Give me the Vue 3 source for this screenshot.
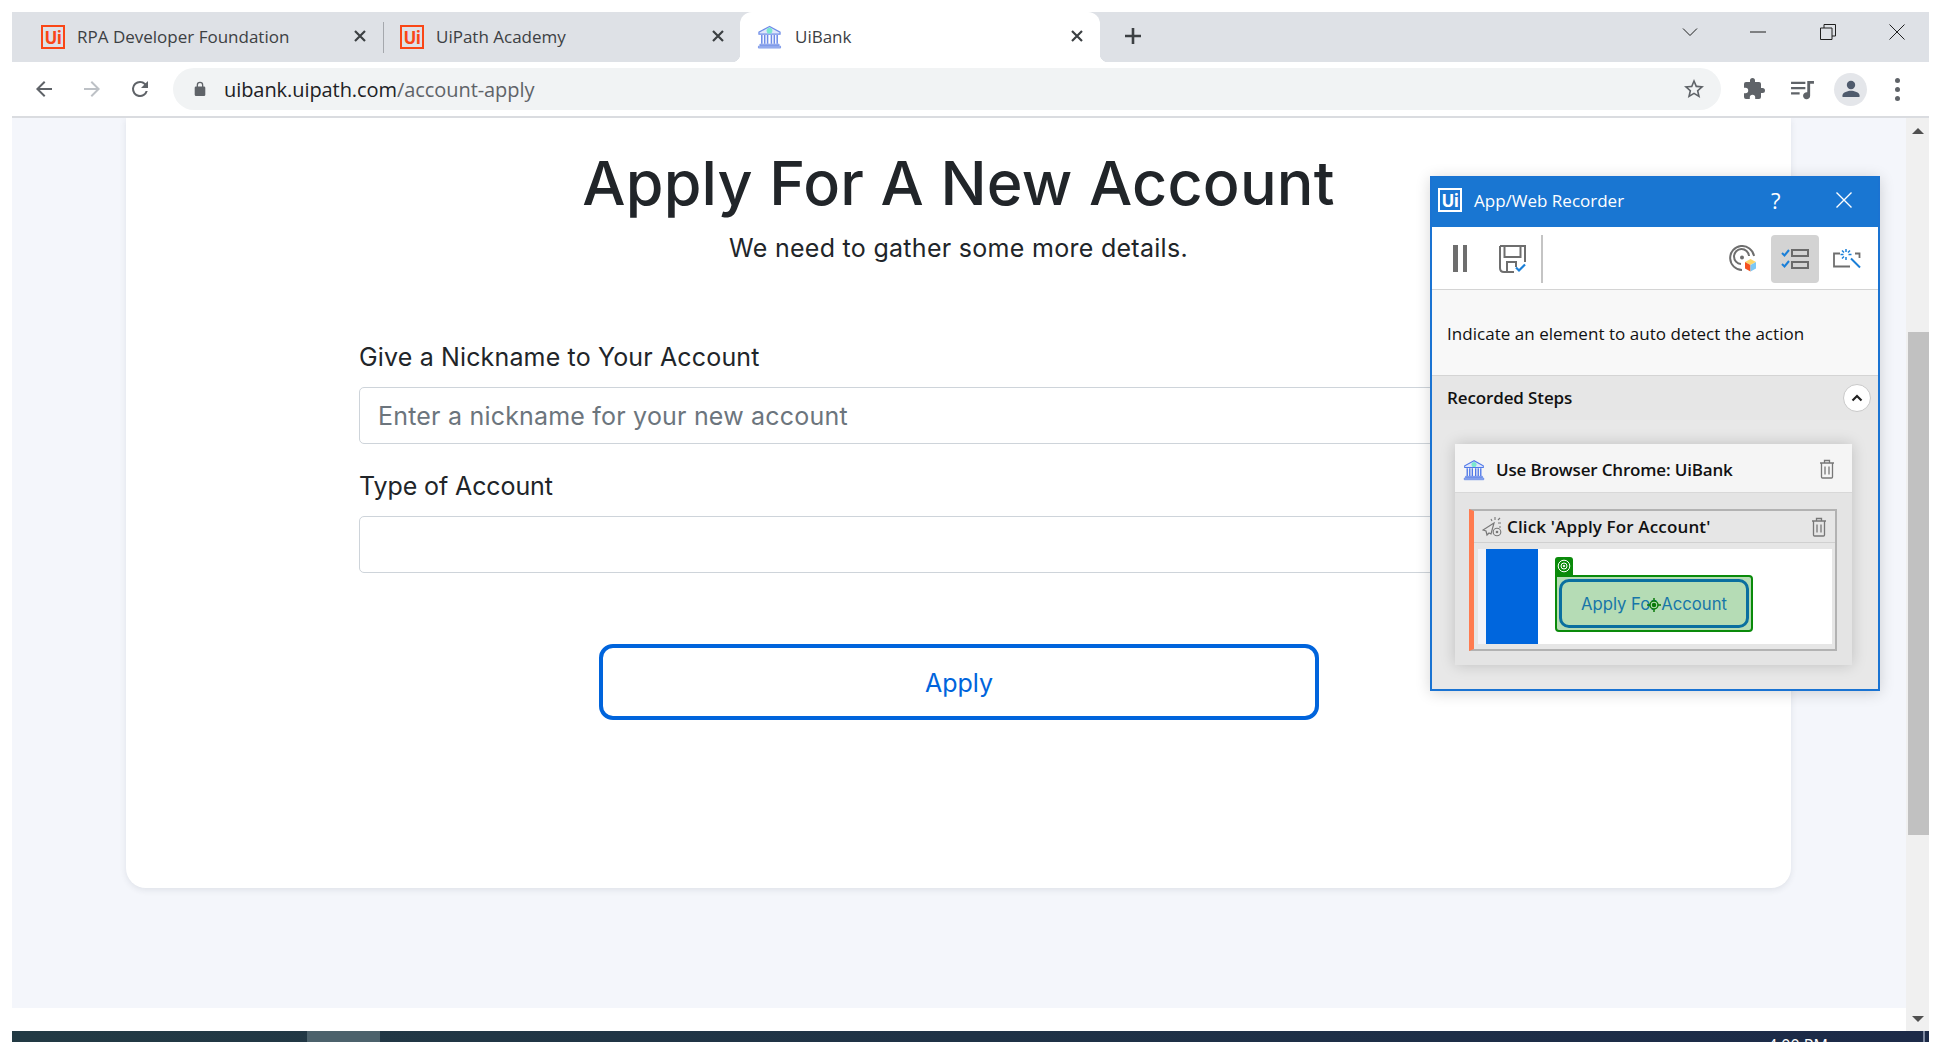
<template>
  <div class="screen">
    <div class="browser">
      <div class="tabstrip">
        <div class="tab tab-one">
          <span class="ui-logo">Ui</span>
          <span class="tab-title">RPA Developer Foundation</span>
          <svg class="tab-x" viewBox="0 0 14 14"><path d="M2 2l10 10M12 2L2 12" /></svg>
        </div>
        <div class="tab-sep"></div>
        <div class="tab tab-two">
          <span class="ui-logo">Ui</span>
          <span class="tab-title">UiPath Academy</span>
          <svg class="tab-x" viewBox="0 0 14 14"><path d="M2 2l10 10M12 2L2 12" /></svg>
        </div>
        <div class="tab tab-active">
          <svg class="bank" viewBox="0 0 26 24">
            <path d="M13 1L2 7v2h22V7z" fill="#dfe6fb" stroke="#6d8ce8" stroke-width="1.2" />
            <circle cx="13" cy="5.5" r="3" fill="#7ce8cf" />
            <path d="M5 10v9M8 10v9M11 10v9M15 10v9M18 10v9M21 10v9" stroke="#6d8ce8" stroke-width="1.6" />
            <path d="M3 19.5h20V21H3zM1.5 21.5h23v2h-23z" fill="#a9bcf0" stroke="#6d8ce8" stroke-width=".8" />
          </svg>
          <span class="tab-title">UiBank</span>
          <svg class="tab-x" viewBox="0 0 14 14"><path d="M2 2l10 10M12 2L2 12" /></svg>
        </div>
        <svg class="new-tab" viewBox="0 0 18 18"><path d="M9 1v16M1 9h16" /></svg>
        <div class="win-controls">
          <svg class="wc wc-chev" viewBox="0 0 16 10"><path d="M1 1.5l7 7 7-7" /></svg>
          <svg class="wc wc-min" viewBox="0 0 16 10"><path d="M0 5h16" /></svg>
          <svg class="wc wc-max" viewBox="0 0 16 16"><path d="M.5 4H12v11.5H.5zM4 4V.5h11.5V12H12" /></svg>
          <svg class="wc wc-close" viewBox="0 0 16 16"><path d="M.5.5l15 15M15.5.5l-15 15" /></svg>
        </div>
      </div>

      <div class="toolbar">
        <svg class="nav" viewBox="0 0 24 24" fill="#5f6368"><path d="M20 11H7.83l5.59-5.59L12 4l-8 8 8 8 1.41-1.41L7.83 13H20z" /></svg>
        <svg class="nav nav-fwd" viewBox="0 0 24 24" fill="#bdc1c6"><path d="M4 11h12.17l-5.59-5.59L12 4l8 8-8 8-1.41-1.41L16.17 13H4z" /></svg>
        <svg class="nav nav-reload" viewBox="0 0 24 24" fill="#5f6368"><path d="M17.65 6.35A7.96 7.96 0 0 0 12 4a8 8 0 1 0 7.73 10h-2.08A6 6 0 1 1 12 6c1.66 0 3.14.69 4.22 1.78L13 11h7V4z" /></svg>
        <div class="omnibox">
          <svg class="lock" viewBox="0 0 12 16" fill="#5f6368"><path d="M10 5.5h-.7V4a3.3 3.3 0 0 0-6.6 0v1.5H2A1.3 1.3 0 0 0 .7 6.8v7A1.3 1.3 0 0 0 2 15h8a1.3 1.3 0 0 0 1.3-1.3v-7A1.3 1.3 0 0 0 10 5.5zM4 5.5V4a2 2 0 0 1 4 0v1.5z" /></svg>
          <span class="url"><b>uibank.uipath.com</b>/account-apply</span>
          <svg class="star" viewBox="0 0 24 24" fill="#5f6368"><path d="M22 9.24l-7.19-.62L12 2 9.19 8.63 2 9.24l5.46 4.73L5.82 21 12 17.27 18.18 21l-1.63-7.03L22 9.24zM12 15.4l-3.76 2.27 1-4.28-3.32-2.88 4.38-.38L12 6.1l1.71 4.04 4.38.38-3.32 2.88 1 4.28L12 15.4z" /></svg>
        </div>
        <svg class="ext" viewBox="0 0 24 24" fill="#5f6368"><path d="M20.5 11H19V7a2 2 0 0 0-2-2h-4V3.5a2.5 2.5 0 0 0-5 0V5H4a2 2 0 0 0-2 2v3.8h1.5a2.7 2.7 0 0 1 0 5.4H2V20a2 2 0 0 0 2 2h3.8v-1.5a2.7 2.7 0 0 1 5.4 0V22H17a2 2 0 0 0 2-2v-4h1.5a2.5 2.5 0 0 0 0-5z" /></svg>
        <svg class="media" viewBox="0 0 26 22" fill="#5f6368"><path d="M1 3h15v2.200H1zM1 8.500h15v2.200H1zM1 14h9v2.200H1zM18 2h7v3h-4v12.500a3.700 3.700 0 1 1-3-3.600z" /></svg>
        <div class="avatar">
          <svg viewBox="0 0 24 24" fill="#4f5b6d"><circle cx="12" cy="8" r="4.200" /><path d="M3.500 20v-1.800c0-3 5.700-4.500 8.500-4.500s8.500 1.500 8.500 4.500V20z" /></svg>
        </div>
        <div class="menu-dots"><i></i><i></i><i></i></div>
      </div>

      <div class="viewport">
        <div class="page">
          <main class="card">
            <h1>Apply For A New Account</h1>
            <p class="lead">We need to gather some more details.</p>
            <form class="form" @submit.prevent>
              <label class="fld-label">Give a Nickname to Your Account</label>
              <div class="fld fld-placeholder">Enter a nickname for your new account</div>
              <label class="fld-label fld-label-2">Type of Account</label>
              <div class="fld"></div>
              <button class="apply" type="button">Apply</button>
            </form>
          </main>
        </div>
        <div class="scrollbar">
          <span class="arrow arrow-up"></span>
          <div class="thumb"></div>
          <span class="arrow arrow-down"></span>
        </div>
      </div>

      <div class="taskbar">
        <div class="task-active"></div>
        <span class="clock">4:00 PM</span>
        <div class="task-edge"></div>
      </div>
    </div>

    <aside class="recorder">
      <header class="rec-title">
        <span class="ui-logo ui-logo-white">Ui</span>
        <span class="rec-name">App/Web Recorder</span>
        <span class="rec-help">?</span>
        <svg class="rec-close" viewBox="0 0 16 16"><path d="M.5.5l15 15M15.5.5l-15 15" /></svg>
      </header>
      <div class="rec-tools">
        <div class="pause"><i></i><i></i></div>
        <svg class="tool tool-save" viewBox="0 0 28 28" fill="none">
          <path d="M1 1h25v16M1 1v22q0 4 4 4h10" stroke="#6e6e6e" stroke-width="2" />
          <path d="M5.500 1v11h16V1M8 27V17h9v5" stroke="#6e6e6e" stroke-width="2" />
          <path d="M17 22.500l3 3 6-6" stroke="#1a7fd8" stroke-width="2.200" />
        </svg>
        <div class="tool-sep"></div>
        <div class="tool-spacer"></div>
        <svg class="tool tool-target" viewBox="0 0 28 28" fill="none">
          <path d="M25 11A12 12 0 1 0 13 25" stroke="#6e6e6e" stroke-width="2" />
          <path d="M20 11a7.500 7.500 0 1 0-8 8" stroke="#6e6e6e" stroke-width="2" />
          <circle cx="13" cy="12.500" r="2" fill="#6e6e6e" />
          <path d="M21.500 14l5.500 3-5.500 3-5.500-3z" fill="#fbd66a" />
          <path d="M16 17l5.500 3v6.500L16 23.500z" fill="#f4511e" />
          <path d="M27 17l-5.500 3v6.500l5.500-3z" fill="#7cc8f5" />
        </svg>
        <div class="tool-on">
          <svg viewBox="0 0 28 22" fill="none">
            <path d="M1 5l2.500 2.500L8 2M1 16l2.500 2.500L8 13" stroke="#1a7fd8" stroke-width="2" />
            <path d="M11 2h16v6H11zM11 14h16v6H11z" stroke="#6a6a6a" stroke-width="2" />
          </svg>
        </div>
        <svg class="tool tool-wand" viewBox="0 0 28 20" fill="none">
          <path d="M7 4.500H1v13h16M22 4.500h4.500V9" stroke="#6e6e6e" stroke-width="1.800" />
          <path d="M18 9.500l9 9" stroke="#1a7fd8" stroke-width="2" />
          <path d="M13 0v3M13 8v3M7.500 5.500h3M15.500 5.500h3M9 1.500l2 2M17 1.500l-2 2M9 9.500l2-2" stroke="#1a7fd8" stroke-width="1.500" />
        </svg>
      </div>
      <div class="rec-hint">Indicate an element to auto detect the action</div>
      <div class="rec-steps-head">
        <strong>Recorded Steps</strong>
        <button class="collapse" type="button">
          <svg viewBox="0 0 12 8" fill="none"><path d="M1.500 6.500L6 2l4.500 4.500" /></svg>
        </button>
      </div>
      <section class="step-card">
        <div class="step-card-head">
          <svg class="bank bank-sm" viewBox="0 0 26 24">
            <path d="M13 1L2 7v2h22V7z" fill="#dfe6fb" stroke="#4f78e8" stroke-width="1.200" />
            <circle cx="13" cy="5.500" r="3" fill="#7ce8cf" />
            <path d="M5 10v9M8 10v9M11 10v9M15 10v9M18 10v9M21 10v9" stroke="#4f78e8" stroke-width="1.600" />
            <path d="M3 19.500h20V21H3zM1.500 21.500h23v2h-23z" fill="#a9bcf0" stroke="#4f78e8" stroke-width=".8" />
          </svg>
          <span class="step-name">Use Browser Chrome: UiBank</span>
          <svg class="trash" viewBox="0 0 16 20" fill="none"><path d="M1 4h14M5.500 4V1.500h5V4M2.500 4v14a1 1 0 0 0 1 1h9a1 1 0 0 0 1-1V4M6 7.500v8M10 7.500v8" /></svg>
        </div>
        <div class="click-step">
          <div class="click-head">
            <svg class="click-icon" viewBox="0 0 20 20" fill="none">
              <path d="M12 6L1 13l3 1 1 4 2-2 2 1z" stroke="#777" stroke-width="1.200" />
              <circle cx="15" cy="15" r="3.800" stroke="#777" stroke-width="1.100" />
              <circle cx="15" cy="15" r="1.300" fill="#777" />
              <path d="M13 0v3M9 2l1 2M18 1l-2 2M19 6h-3M19 10h-2" stroke="#777" stroke-width="1.100" />
            </svg>
            <span class="step-name">Click 'Apply For Account'</span>
            <svg class="trash" viewBox="0 0 16 20" fill="none"><path d="M1 4h14M5.500 4V1.500h5V4M2.500 4v14a1 1 0 0 0 1 1h9a1 1 0 0 0 1-1V4M6 7.500v8M10 7.500v8" /></svg>
          </div>
          <div class="shot">
            <div class="shot-blue"></div>
            <div class="shot-target">
              <div class="shot-tag">
                <svg viewBox="0 0 14 14" fill="none" stroke="#fff"><circle cx="7" cy="7" r="5.800" /><circle cx="7" cy="7" r="3" /><circle cx="7" cy="7" r=".8" fill="#fff" /></svg>
              </div>
              <div class="shot-box">
                <div class="shot-btn">Apply For Account</div>
                <svg class="crosshair" viewBox="0 0 14 14" fill="none" stroke="#0a7a0a" stroke-width="1.500">
                  <circle cx="7" cy="7" r="4" fill="#b5dcb5" />
                  <circle cx="7" cy="7" r="1.500" fill="#0a7a0a" />
                  <path d="M7 0v3M7 11v3M0 7h3M11 7h3" />
                </svg>
              </div>
            </div>
          </div>
        </div>
      </section>
    </aside>
  </div>
</template>

<script setup>
</script>

<style>
html, body { margin: 0; background: #fff; overflow: hidden; }
</style>

<style scoped>
* { box-sizing: border-box; }
.screen { position: relative; width: 1942px; height: 1042px; padding: 12px 13px 0 12px; background: #fff; font-family: "Open Sans", "Noto Sans", sans-serif; overflow: hidden; }
.browser { display: flex; flex-direction: column; height: 100%; }

/* tab strip */
.tabstrip { display: flex; align-items: stretch; height: 50px; background: #dee1e6; flex: none; }
.tab { display: flex; align-items: center; height: 100%; color: #3c4043; flex: none; }
.tab-one { width: 371px; padding-left: 29px; }
.tab-two { width: 357px; padding-left: 16px; }
.tab-sep { width: 1px; height: 31px; margin-top: 10px; background: #a5a8ad; flex: none; }
.tab-active { position: relative; width: 360px; padding-left: 17px; background: #fff; border-radius: 12px 12px 0 0; margin-left: -1px; }
.tab-active::before, .tab-active::after { content: ""; position: absolute; bottom: 0; width: 8px; height: 8px; }
.tab-active::before { left: -8px; background: radial-gradient(circle at 0 0, transparent 8px, #fff 8.5px); }
.tab-active::after { right: -8px; background: radial-gradient(circle at 100% 0, transparent 8px, #fff 8.5px); }
.tab-title { font-size: 17px; margin: -2px 0 0 12px; white-space: nowrap; flex: 1; }
.tab-active .tab-title { margin-left: 13px; }
.tab-x { width: 14px; height: 14px; margin: -2px 16px 0 0; fill: none; stroke: #3c4043; stroke-width: 2.2; flex: none; }
.new-tab { width: 18px; height: 18px; align-self: center; margin: -2px 0 0 24px; fill: none; stroke: #3c4043; stroke-width: 2.6; flex: none; }
.ui-logo { width: 24px; height: 24px; flex: none; display: flex; align-items: center; justify-content: center; border: 2.5px solid #fa4616; color: #fa4616; font: 700 17px/1 "Open Sans", sans-serif; letter-spacing: -.5px; }
.ui-logo-white { border-color: #fff; color: #fff; background: transparent; }
.win-controls { margin-left: auto; position: relative; width: 260px; display: flex; align-items: center; }
.wc { position: absolute; fill: none; stroke: #1f1f1f; stroke-width: 1; top: 13px; }
.wc-chev { left: 13px; width: 16px; height: 10px; top: 15px; }
.wc-min { left: 81px; width: 16px; height: 10px; top: 15px; }
.wc-max { left: 151px; width: 16px; height: 16px; top: 12px; }
.wc-close { left: 220px; width: 16px; height: 16px; top: 12px; }

/* toolbar */
.toolbar { display: flex; align-items: center; height: 56px; background: #fff; border-bottom: 2px solid #dadce0; flex: none; position: relative; }
.nav { width: 24px; height: 24px; margin-left: 20px; flex: none; }
.nav-fwd { margin-left: 24px; }
.nav-reload { margin-left: 24px; }
.omnibox { display: flex; align-items: center; width: 1548px; height: 42px; margin-left: 21px; background: #f1f3f4; border-radius: 21px; padding: 0 15px 0 21px; flex: none; }
.lock { width: 12px; height: 16px; flex: none; }
.url { font-size: 20px; letter-spacing: -.07px; color: #5f6368; margin-left: 18px; flex: 1; white-space: nowrap; }
.url b { font-weight: 400; color: #202124; }
.star { width: 24px; height: 24px; flex: none; }
.ext { width: 24px; height: 24px; margin-left: 21px; flex: none; }
.media { width: 25px; height: 21px; margin-left: 24px; flex: none; }
.avatar { width: 33px; height: 33px; border-radius: 50%; background: #e4e6ea; margin-left: 19px; display: flex; align-items: center; justify-content: center; flex: none; }
.avatar svg { width: 24px; height: 24px; }
.menu-dots { display: flex; flex-direction: column; gap: 4px; margin-left: 28px; flex: none; }
.menu-dots i { width: 5px; height: 5px; border-radius: 50%; background: #5f6368; }

/* page */
.viewport { flex: 1; display: flex; min-height: 0; background: #fff; }
.page { flex: 1; height: 890px; background: #f4f6fb; padding: 0 115px 0 114px; }
.card { height: 770px; background: #fff; border-radius: 0 0 20px 20px; box-shadow: 0 2px 6px rgba(40, 50, 70, .1); padding-top: 29px; font-family: Inter, "Open Sans", sans-serif; }
h1 { margin: 0; text-align: center; font-size: 61px; line-height: 72px; font-weight: 500; color: #212529; letter-spacing: .2px; }
.lead { margin: 13px 0 0; text-align: center; font-size: 25px; line-height: 32px; letter-spacing: .29px; color: #212529; }
.form { margin-left: 233px; width: 1199px; margin-top: 75px; }
.fld-label { display: block; font-size: 25px; line-height: 36px; letter-spacing: .15px; color: #212529; }
.fld-label-2 { margin-top: 24px; letter-spacing: -.1px; }
.fld { height: 57px; margin-top: 12px; border: 1px solid #ced4da; border-radius: 5px; background: #fff; }
.fld-placeholder { display: flex; align-items: center; padding-left: 18px; font-size: 25px; letter-spacing: .2px; color: #6c757d; }
.apply { display: block; width: 720px; height: 76px; margin: 71px 0 0 240px; padding-top: 3px; background: #fff; border: 4px solid #0064dc; border-radius: 14px; color: #0064dc; font: 400 25px Inter, sans-serif; }

/* scrollbar */
.scrollbar { width: 23px; height: 913px; background: #f0f0f0; display: flex; flex-direction: column; align-items: center; position: relative; flex: none; }
.arrow { width: 0; height: 0; border-left: 6px solid transparent; border-right: 6px solid transparent; flex: none; }
.arrow-up { border-bottom: 6px solid #505050; margin-top: 10px; }
.arrow-down { border-top: 6px solid #505050; margin-top: 181px; }
.thumb { width: 21px; height: 503px; margin: 198px 0 0 2px; background: #c1c1c1; }

.taskbar { height: 11px; background: linear-gradient(90deg, #223a44, #1c2a48); position: relative; flex: none; display: flex; overflow: hidden; }
.task-active { width: 73px; margin-left: 295px; background: #4c626c; }
.task-edge { position: absolute; right: 4px; top: 0; width: 2px; height: 100%; background: #7d88a0; }
.clock { position: absolute; left: 1756px; top: 6px; color: #fff; font-size: 16px; line-height: 16px; white-space: nowrap; }

/* recorder panel */
.recorder { position: absolute; left: 1430px; top: 176px; width: 450px; height: 515px; border: 2px solid #1a73d2; border-top-width: 1px; background: #e8e8e8; box-shadow: 0 2px 14px rgba(0, 0, 0, .16); display: flex; flex-direction: column; color: #111; font-family: "Open Sans", "Noto Sans", sans-serif; }
.rec-title { display: flex; align-items: center; height: 50px; background: #1976d2; color: #fff; padding: 0 0 4px 6px; flex: none; }
.rec-name { font-size: 17px; margin-left: 12px; width: 297px; white-space: nowrap; }
.rec-help { font-size: 22px; width: 65px; }
.rec-close { width: 16px; height: 16px; fill: none; stroke: #fff; stroke-width: 1.4; }
.rec-tools { display: flex; align-items: center; height: 63px; background: #fff; border-bottom: 1px solid #d4d4d4; padding: 1px 0 0 21px; flex: none; }
.pause { display: flex; gap: 5px; width: 14px; height: 27px; flex: none; }
.pause i { width: 4.5px; height: 27px; background: #6e6e6e; flex: none; }
.tool { flex: none; }
.tool-save { width: 28px; height: 28px; margin-left: 32px; }
.tool-sep { width: 2px; height: 48px; background: #c4c4c4; margin-left: 14px; flex: none; }
.tool-spacer { flex: 1; }
.tool-target { width: 28px; height: 28px; }
.tool-on { width: 48px; height: 48px; margin-left: 14px; border-radius: 4px; background: #d3d3d3; display: flex; align-items: center; justify-content: center; flex: none; }
.tool-on svg { width: 28px; height: 22px; }
.tool-wand { width: 28px; height: 20px; margin: 0 17px 0 14px; }
.rec-hint { display: flex; align-items: center; height: 86px; padding: 2px 0 0 15px; background: #f8f8f8; border-bottom: 1px solid #d4d4d4; font-size: 17px; letter-spacing: .03px; flex: none; }
.rec-steps-head { display: flex; align-items: center; justify-content: space-between; height: 44px; padding: 0 7px 0 15px; background: #e6e6e6; flex: none; }
.rec-steps-head strong { font-size: 17px; font-weight: 600; letter-spacing: -.12px; margin-top: -2px; }
.collapse { width: 28px; height: 28px; padding: 0; border: 1px solid #c9c9c9; border-radius: 50%; background: #fff; display: flex; align-items: center; justify-content: center; }
.collapse svg { width: 12px; height: 8px; stroke: #222; stroke-width: 2.2; }
.step-card { width: 397px; height: 221px; margin: 24px 0 0 23px; background: #e4e4e4; box-shadow: 0 0 14px rgba(0, 0, 0, .18); flex: none; }
.step-card-head { display: flex; align-items: center; height: 49px; background: #f5f5f5; border-bottom: 1px solid #d8d8d8; padding: 2px 17px 0 8px; }
.bank { width: 25px; height: 24px; flex: none; }
.bank-sm { width: 22px; height: 22px; margin-top: 2px; }
.step-name { font-size: 17px; font-weight: 600; letter-spacing: -.17px; margin-left: 11px; flex: 1; white-space: nowrap; }
.trash { width: 16px; height: 20px; stroke: #777; stroke-width: 1.3; flex: none; }
.click-step { height: 142px; margin: 16px 15px 0 14px; border: 2px solid #b2b2b2; border-left: 5px solid #ff7b4f; background: #e6e6e6; }
.click-head { display: flex; align-items: center; height: 32px; padding: 0 8px; border-bottom: 1px solid #d0d0d0; }
.click-icon { width: 20px; height: 20px; flex: none; }
.click-head .step-name { margin-left: 5px; letter-spacing: .15px; }
.shot { display: flex; height: 95px; margin: 6px 3px 0 4px; padding-left: 8px; background: linear-gradient(90deg, #f2f3f9 8px, #fff 8px); }
.shot-blue { width: 52px; height: 100%; background: #0066dd; flex: none; }
.shot-target { width: 198px; margin: 8px 0 0 17px; }
.shot-tag { width: 18px; height: 18px; border-radius: 3px 3px 0 0; background: #0a8a0a; display: flex; align-items: center; justify-content: center; }
.shot-tag svg { width: 14px; height: 14px; }
.shot-box { position: relative; height: 57px; border: 2px solid #0a8a0a; border-radius: 0 4px 4px 4px; background: #b5dcb5; padding: 2px; }
.shot-btn { height: 49px; border: 3px solid #0a6f9f; border-radius: 10px; display: flex; align-items: center; justify-content: center; color: #1776a8; font: 400 16.7px Inter, sans-serif; }
.crosshair { position: absolute; left: 90px; top: 21px; width: 14px; height: 14px; }
</style>
